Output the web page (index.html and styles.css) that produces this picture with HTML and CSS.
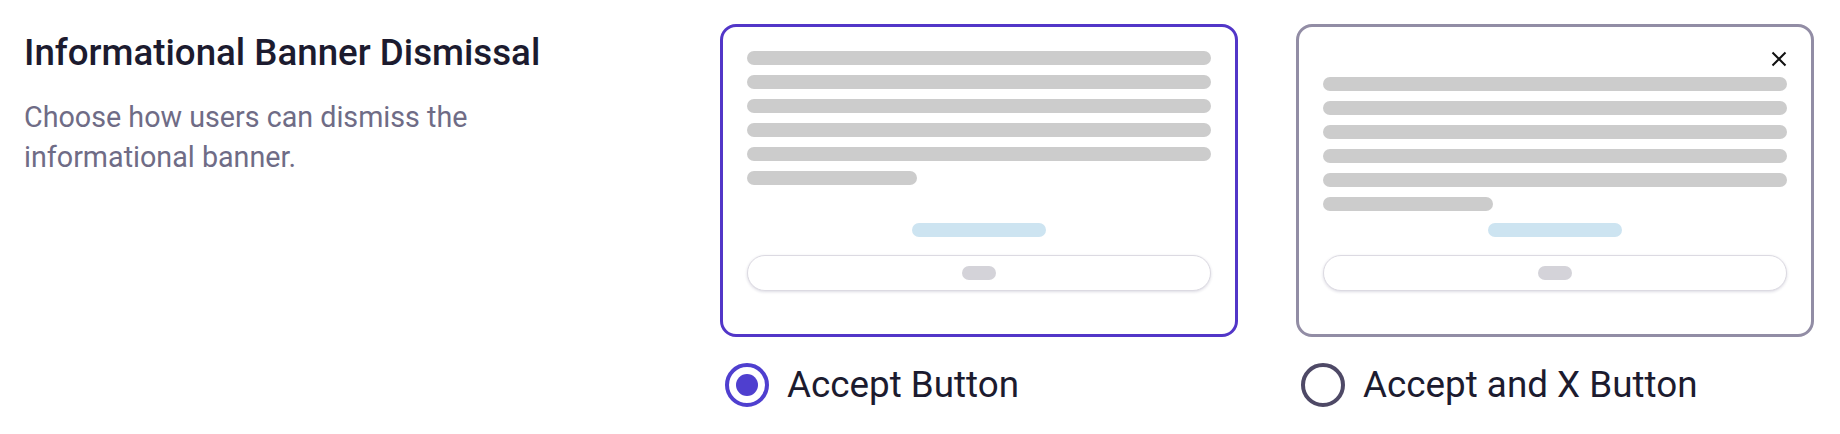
FILE: index.html
```html
<!DOCTYPE html>
<html lang="en">
<head>
<meta charset="utf-8">
<title>Informational Banner Dismissal</title>
<link rel="stylesheet" href="styles.css">
</head>
<body>
<div class="page">
  <div class="intro">
    <h2 class="title">Informational Banner Dismissal</h2>
    <p class="desc">Choose how users can dismiss the informational banner.</p>
  </div>
  <div class="options">
    <label class="option">
      <div class="card card-selected">
        <div class="lines">
          <div class="line"></div>
          <div class="line"></div>
          <div class="line"></div>
          <div class="line"></div>
          <div class="line"></div>
          <div class="line line-short"></div>
        </div>
        <div class="cta">
          <div class="link-bar"></div>
          <div class="btn"><div class="btn-pill"></div></div>
        </div>
      </div>
      <div class="choice">
        <span class="radio radio-on"><span class="radio-dot"></span></span>
        <span class="choice-label">Accept Button</span>
      </div>
    </label>
    <label class="option">
      <div class="card card-plain">
        <div class="close-row">
          <svg class="close-icon" width="16" height="16" viewBox="0 0 16 16" aria-hidden="true">
            <path d="M1.5 1.5 L14.5 14.5 M14.5 1.5 L1.5 14.5" stroke="#111" stroke-width="2" fill="none"/>
          </svg>
        </div>
        <div class="lines">
          <div class="line"></div>
          <div class="line"></div>
          <div class="line"></div>
          <div class="line"></div>
          <div class="line"></div>
          <div class="line line-short"></div>
        </div>
        <div class="cta">
          <div class="link-bar"></div>
          <div class="btn"><div class="btn-pill"></div></div>
        </div>
      </div>
      <div class="choice">
        <span class="radio radio-off"></span>
        <span class="choice-label">Accept and X Button</span>
      </div>
    </label>
  </div>
</div>
</body>
</html>
```

FILE: styles.css
```css
html, body {
  margin: 0;
  padding: 0;
  background: #ffffff;
}

body {
  font-family: Roboto, "Liberation Sans", Arial, sans-serif;
}

.page {
  display: flex;
  align-items: flex-start;
  padding: 24px 26px 0 24px;
}

.intro {
  flex: 0 0 696px;
}

.title {
  margin: 8px 0 0 0;
  font-size: 36.7px;
  line-height: 42px;
  font-weight: 500;
  color: #1c1b2f;
}

.desc {
  margin: 23px 0 0 0;
  max-width: 470px;
  font-size: 28.7px;
  line-height: 40px;
  font-weight: 400;
  color: #6f6c86;
}

.options {
  display: grid;
  grid-template-columns: 518px 518px;
  column-gap: 58px;
}

.option {
  display: flex;
  flex-direction: column;
  cursor: pointer;
}

.card {
  box-sizing: border-box;
  height: 313px;
  border: 3px solid #928da5;
  border-radius: 16px;
  padding: 24px 24px 43px 24px;
  display: flex;
  flex-direction: column;
  background: #ffffff;
}

.card-selected {
  border-color: #5236c8;
}

.close-row {
  display: flex;
  justify-content: flex-end;
  height: 16px;
  margin-bottom: 10px;
}

.close-icon {
  display: block;
}

.lines {
  display: flex;
  flex-direction: column;
  gap: 10px;
}

.line {
  height: 14px;
  border-radius: 7px;
  background: #cccccc;
}

.line-short {
  width: 170px;
}

.cta {
  margin-top: auto;
  display: flex;
  flex-direction: column;
  align-items: center;
}

.link-bar {
  width: 134px;
  height: 14px;
  border-radius: 7px;
  background: #cde4f1;
}

.btn {
  box-sizing: border-box;
  margin-top: 18px;
  width: 100%;
  height: 36px;
  border: 1px solid #dcdae2;
  border-radius: 18px;
  box-shadow: 0 1px 3px rgba(40, 30, 80, 0.16);
  display: flex;
  align-items: center;
  justify-content: center;
  background: #ffffff;
}

.btn-pill {
  width: 34px;
  height: 14px;
  border-radius: 7px;
  background: #d4d3d9;
}

.choice {
  margin-top: 26px;
  display: flex;
  align-items: center;
  gap: 18px;
  padding-left: 5px;
}

.radio {
  box-sizing: border-box;
  flex: 0 0 44px;
  width: 44px;
  height: 44px;
  border-radius: 50%;
  border: 4px solid #4e4966;
  display: flex;
  align-items: center;
  justify-content: center;
}

.radio-on {
  border-color: #4f3fcf;
}

.radio-dot {
  width: 22px;
  height: 22px;
  border-radius: 50%;
  background: #4f3fcf;
}

.choice-label {
  font-size: 36.8px;
  line-height: 44px;
  font-weight: 400;
  color: #1c1b2f;
}
```
